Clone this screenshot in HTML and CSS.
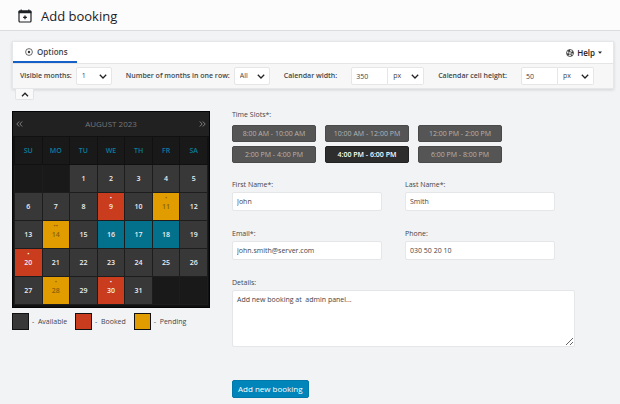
FILE: index.html
```html
<!DOCTYPE html>
<html lang="en">
<head>
<meta charset="utf-8">
<meta name="viewport" content="width=device-width, initial-scale=1">
<title>Add booking</title>
<link rel="stylesheet" href="styles.css">
</head>
<body>
<header class="page-header">
  <svg class="page-icon" viewBox="0 0 14 14" aria-hidden="true">
    <rect x="1" y="2" width="12" height="11" rx="1" fill="none" stroke="#1d2125" stroke-width="1.2"/>
    <path d="M.6 2.2Q.6 1.4 1.5 1.4H2.6V.4H3.8V1.4H10.2V.4H11.4V1.4H12.5Q13.4 1.4 13.4 2.2V4.2H.6Z" fill="#1d2125"/>
    <path d="M7 6.4V10.2M5.1 8.3H8.9" stroke="#1d2125" stroke-width="1.3"/>
  </svg>
  <h1>Add booking</h1>
</header>

<main>
  <section class="panel">
    <nav class="tabs">
      <a class="tab" href="#options">
        <svg class="tab-icon" viewBox="0 0 8 8" aria-hidden="true"><circle cx="4" cy="4" r="3.4" fill="none" stroke="#444" stroke-width=".8"/><circle cx="4" cy="4" r="1.2" fill="#333"/></svg>
        Options
      </a>
      <a class="help" href="#help">
        <svg class="tab-icon" viewBox="0 0 8 8" aria-hidden="true"><circle cx="4" cy="4" r="3.5" fill="none" stroke="#333" stroke-width=".8"/><circle cx="4" cy="4" r="1.4" fill="none" stroke="#333" stroke-width=".7"/><circle cx="4" cy="4" r="2.4" fill="none" stroke="#333" stroke-width="1.7" stroke-dasharray="1.885 1.885" stroke-dashoffset=".942" transform="rotate(45 4 4)"/></svg>
        Help
        <svg class="caret" viewBox="0 0 4 3" aria-hidden="true"><path d="M0 .5H4L2 2.7Z" fill="#222"/></svg>
      </a>
    </nav>
    <div class="toolbar" id="options">
      <div class="option">
        <label for="months">Visible months:</label>
        <span class="picker"><select id="months"><option>1</option></select><svg viewBox="0 0 8 5" aria-hidden="true"><path d="M.8.8L4 4L7.2.8"/></svg></span>
      </div>
      <div class="option">
        <label for="per-row">Number of months in one row:</label>
        <span class="picker"><select id="per-row"><option>All</option></select><svg viewBox="0 0 8 5" aria-hidden="true"><path d="M.8.8L4 4L7.2.8"/></svg></span>
      </div>
      <div class="option size">
        <label for="cal-width">Calendar width:</label>
        <span class="group"><input id="cal-width" type="text" value="350"><span class="picker"><select aria-label="Calendar width unit"><option>px</option></select><svg viewBox="0 0 8 5" aria-hidden="true"><path d="M.8.8L4 4L7.2.8"/></svg></span></span>
      </div>
      <div class="option size">
        <label for="cell-height">Calendar cell height:</label>
        <span class="group"><input id="cell-height" type="text" value="50"><span class="picker"><select aria-label="Cell height unit"><option>px</option></select><svg viewBox="0 0 8 5" aria-hidden="true"><path d="M.8.8L4 4L7.2.8"/></svg></span></span>
      </div>
    </div>
  </section>
  <button class="collapse" type="button" aria-label="Collapse options"><svg viewBox="0 0 8 5" aria-hidden="true"><path d="M1 4.2L4 1.2L7 4.2"/></svg></button>

  <div class="content">
    <section class="calendar-column">
      <div class="calendar">
        <div class="month">
          <a href="#prev" aria-label="Previous month"><svg viewBox="0 0 7 6" aria-hidden="true"><path d="M3.2.5L.8 3L3.2 5.5M6.2.5L3.8 3L6.2 5.5"/></svg></a>
          <span>AUGUST 2023</span>
          <a href="#next" aria-label="Next month"><svg viewBox="0 0 7 6" aria-hidden="true"><path d="M.8.5L3.2 3L.8 5.5M3.8.5L6.2 3L3.8 5.5"/></svg></a>
        </div>
        <table>
          <thead><tr><th>SU</th><th>MO</th><th>TU</th><th>WE</th><th>TH</th><th>FR</th><th>SA</th></tr></thead>
          <tbody>
            <tr><td class="empty"></td><td class="empty"></td><td>1</td><td>2</td><td>3</td><td>4</td><td>5</td></tr>
            <tr><td>6</td><td>7</td><td>8</td><td class="booked one">9</td><td>10</td><td class="pending one">11</td><td>12</td></tr>
            <tr><td>13</td><td class="pending two">14</td><td>15</td><td class="selected">16</td><td class="selected">17</td><td class="selected">18</td><td>19</td></tr>
            <tr><td class="booked one">20</td><td>21</td><td>22</td><td>23</td><td>24</td><td>25</td><td>26</td></tr>
            <tr><td>27</td><td class="pending one">28</td><td>29</td><td class="booked one">30</td><td>31</td><td class="empty"></td><td class="empty"></td></tr>
          </tbody>
        </table>
      </div>
      <ul class="legend">
        <li><span class="swatch"></span>-&nbsp; Available</li>
        <li><span class="swatch booked"></span>-&nbsp; Booked</li>
        <li><span class="swatch pending"></span>-&nbsp; Pending</li>
      </ul>
    </section>

    <form class="booking">
      <fieldset>
        <legend>Time Slots*:</legend>
        <div class="slots">
          <button type="button">8:00 AM - 10:00 AM</button>
          <button type="button">10:00 AM - 12:00 PM</button>
          <button type="button">12:00 PM - 2:00 PM</button>
          <button type="button">2:00 PM - 4:00 PM</button>
          <button type="button" class="active">4:00 PM - 6:00 PM</button>
          <button type="button">6:00 PM - 8:00 PM</button>
        </div>
      </fieldset>
      <div class="fields">
        <div class="field"><label for="first">First Name*:</label><input id="first" type="text" value="John"></div>
        <div class="field"><label for="last">Last Name*:</label><input id="last" type="text" value="Smith"></div>
        <div class="field"><label for="email">Email*:</label><input id="email" type="email" value="john.smith@server.com"></div>
        <div class="field"><label for="phone">Phone:</label><input id="phone" type="tel" value="030 50 20 10"></div>
      </div>
      <div class="field details"><label for="details">Details:</label><textarea id="details">Add new booking at  admin panel...</textarea></div>
      <button class="submit" type="button">Add new booking</button>
    </form>
  </div>
</main>
</body>
</html>
```
FILE: styles.css
```css
* { box-sizing: border-box; }

body {
  margin: 0;
  background: #f2f3f5;
  color: #41464b;
  font: 7px/10px "Open Sans", "Noto Sans", sans-serif;
}

input, select, textarea, button {
  margin: 0;
  font: inherit;
  color: inherit;
}

a { color: inherit; text-decoration: none; }

.page-header {
  display: flex;
  align-items: center;
  gap: 9px;
  height: 31px;
  padding: 2px 18px 0;
  background: #fcfcfc;
  border-bottom: 1px solid #dcdddf;
}

.page-icon { width: 14px; height: 14px; }

h1 {
  margin: 0;
  color: #1d2125;
  font-size: 13px;
  line-height: 20px;
  font-weight: 400;
}

main { padding: 10px 6px 7px 12px; }

.panel {
  background: #f7f7f7;
  border: 1px solid #e6e7e8;
  box-shadow: 0 1px 3px #00000022;
}

.tabs {
  display: flex;
  justify-content: space-between;
  height: 22px;
  background: #fff;
  border-bottom: 1px solid #e5e5e5;
  font-size: 8px;
  font-weight: 600;
}

.tab, .help { display: flex; align-items: center; gap: 4px; }
.tab { padding: 0 9px 0 12px; border-bottom: 2px solid #1560c8; }
.help { gap: 3px; padding-right: 11px; color: #222; }
.tab-icon { width: 8px; height: 8px; }
.caret { width: 4px; height: 3px; }

.toolbar {
  display: flex;
  align-items: center;
  gap: 14px;
  height: 24px;
  padding: 0 7px;
}

.option { display: flex; align-items: center; gap: 4px; white-space: nowrap; font-weight: 600; }
.option.size { gap: 14px; }
.option input, .option select { font-weight: 400; }
.group { display: flex; }
.group input { width: 37px; border-radius: 2px 0 0 2px; }
.group .picker select { border-left: 0; border-radius: 0 2px 2px 0; }

.picker { display: grid; align-items: center; width: 36px; }
.picker select, .picker svg { grid-area: 1 / 1; }
.picker svg { justify-self: end; width: 8px; height: 5px; margin-right: 5px; pointer-events: none; }
.picker path, .collapse path { fill: none; stroke: #222; stroke-width: 1.3; }

input, select, textarea {
  width: 100%;
  height: 18px;
  padding: 0 4px;
  background: #fff;
  border: 1px solid #e5e6e7;
  border-radius: 2px;
  outline: 0;
}

select { appearance: none; padding: 0 5px; }

.collapse {
  display: flex;
  align-items: center;
  justify-content: center;
  width: 19px;
  height: 11px;
  margin-left: 3px;
  padding: 0;
  background: #f9f9f9;
  border: 1px solid #e2e3e4;
  border-top: 0;
  border-radius: 0 0 2px 2px;
}

.collapse svg { width: 8px; height: 5px; }

.content { display: flex; gap: 22px; padding-top: 11px; }
.calendar-column { flex: 0 0 198px; }

.calendar {
  padding: 0 1px 2px;
  background: #111;
  border: 1px solid #050505;
}

.month {
  display: flex;
  align-items: center;
  justify-content: space-between;
  height: 24px;
  margin: 0 -1px;
  padding: 0 3px;
  background: #212121;
  color: #777;
  font-size: 8px;
}

.month a { display: flex; }
.month svg { width: 7px; height: 6px; }
.month path { fill: none; stroke: #999; stroke-width: .8; }

table { width: 100%; border-collapse: collapse; table-layout: fixed; }
th, td { height: 28px; padding: 0; border: 1px solid #1d1d1d; text-align: center; vertical-align: middle; }
th { background: #191919; border-color: #111; color: #087f9f; font-size: 7px; font-weight: 600; }
td { background: #383838; color: #eee; font-weight: 600; }
td.empty { background: #191919; }
td.selected { background: #03708c; }
.booked { background: #c93c1e; }
.pending { background: #e19d00; }
td.pending { color: #8a6208; }

.one::before, .two::before {
  content: "•";
  display: block;
  height: 6px;
  margin-top: -6px;
  font-size: 6px;
  line-height: 5px;
}

.two::before { content: "••"; }

.legend {
  display: flex;
  gap: 8px;
  margin: 5px 0 0;
  padding: 0;
  list-style: none;
}

.legend li { display: flex; align-items: center; white-space: nowrap; }
.swatch { width: 17px; height: 17px; margin-right: 3px; border: 1px solid #111; }
.swatch:not(.booked, .pending) { background: #383838; }

.booking { flex: 1; min-width: 0; padding-right: 39px; }
fieldset { margin: 0; padding: 0; border: 0; }
legend { padding: 0; line-height: 8px; }

.slots {
  display: grid;
  grid-template-columns: repeat(3, 84px);
  gap: 4px 9px;
  margin-top: 6px;
}

.slots button {
  height: 17px;
  padding: 0;
  background: #555;
  border: 1px solid #4a4a4a;
  border-radius: 2px;
  color: #b4b4b4;
  line-height: 10px;
}

.slots .active { background: #2d2d2d; border-color: #222; color: #fff; font-weight: 600; }

.fields {
  display: grid;
  grid-template-columns: 1fr 1fr;
  gap: 18px 23px;
  margin: 17px 20px 0 0;
}

.field { display: grid; gap: 2px; }
.field input { height: 19px; }
.details { margin-top: 18px; }
textarea { height: 57px; padding: 4px; resize: vertical; white-space: pre-wrap; }

.submit {
  height: 18px;
  margin-top: 33px;
  padding: 0 5px;
  background: #0085ba;
  border: 1px solid #0079aa;
  border-radius: 2px;
  color: #fff;
  font-size: 8px;
}
```
